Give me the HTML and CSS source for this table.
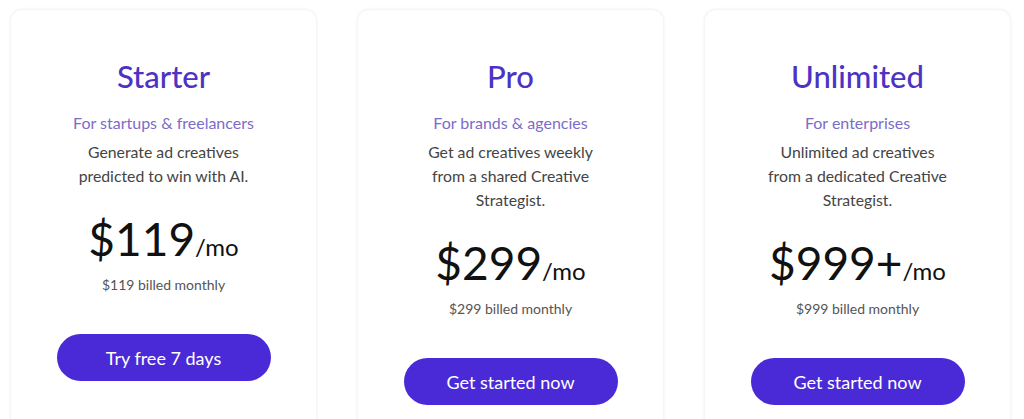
FILE: index.html
```html
<!DOCTYPE html>
<html lang="en">
<head>
<meta charset="utf-8">
<title>Pricing</title>
<link rel="stylesheet" href="styles.css">
</head>
<body>
<main class="plans">
  <section class="card">
    <h2 class="title">Starter</h2>
    <p class="audience">For startups &amp; freelancers</p>
    <p class="desc">Generate ad creatives<br>predicted to win with AI.</p>
    <p class="price">$119<span class="per">/mo</span></p>
    <p class="billed">$119 billed monthly</p>
    <a class="btn" href="#">Try free 7 days</a>
  </section>
  <section class="card">
    <h2 class="title">Pro</h2>
    <p class="audience">For brands &amp; agencies</p>
    <p class="desc">Get ad creatives weekly<br>from a shared Creative<br>Strategist.</p>
    <p class="price">$299<span class="per">/mo</span></p>
    <p class="billed">$299 billed monthly</p>
    <a class="btn" href="#">Get started now</a>
  </section>
  <section class="card">
    <h2 class="title">Unlimited</h2>
    <p class="audience">For enterprises</p>
    <p class="desc">Unlimited ad creatives<br>from a dedicated Creative<br>Strategist.</p>
    <p class="price">$999+<span class="per">/mo</span></p>
    <p class="billed">$999 billed monthly</p>
    <a class="btn" href="#">Get started now</a>
  </section>
</main>
</body>
</html>
```

FILE: styles.css
```css
html, body {
  margin: 0;
  padding: 0;
  background: #ffffff;
  overflow: hidden;
}
body {
  font-family: "Lato", "Noto Sans", "Liberation Sans", sans-serif;
  color: #222;
}
.plans {
  display: grid;
  grid-template-columns: repeat(3, 307px);
  column-gap: 40px;
  padding: 9px 0 0 10px;
}
.card {
  display: flex;
  flex-direction: column;
  align-items: center;
  text-align: center;
  min-height: 440px;
  padding: 48px 20px 0;
  box-sizing: border-box;
  border-radius: 12px;
  background: #fff;
  box-shadow: 0 0 3px rgba(0, 0, 0, 0.06);
  border: 1px solid #f5f5f7;
}
.title {
  margin: 0;
  font-size: 31px;
  line-height: 36px;
  font-weight: 500;
  color: #4c33c3;
}
.audience {
  margin: 17px 0 0;
  font-size: 16px;
  line-height: 24px;
  color: #7b6cca;
}
.desc {
  margin: 5px 0 0;
  font-size: 15.8px;
  line-height: 24px;
  color: #444;
}
.price {
  margin: 25px 0 0;
  font-size: 46px;
  line-height: 52px;
  color: #111;
}
.per {
  font-size: 24px;
}
.billed {
  margin: 2px 0 0;
  font-size: 14px;
  line-height: 20px;
  color: #555;
}
.btn {
  margin-top: 39px;
  width: 214px;
  height: 47px;
  border-radius: 24px;
  background: #4a2ad6;
  color: #fff;
  text-decoration: none;
  font-size: 18px;
  display: flex;
  align-items: center;
  justify-content: center;
}
```
